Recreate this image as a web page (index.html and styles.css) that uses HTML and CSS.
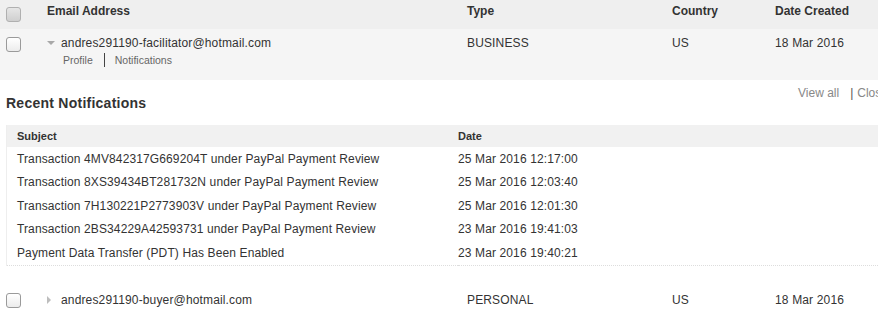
FILE: index.html
```html
<!DOCTYPE html>
<html lang="en">
<head>
    <meta charset="UTF-8">
    <title>Sandbox Accounts</title>
    <link rel="stylesheet" href="styles.css">
</head>
<body>
    <div class="page">
        <div class="account-row head-row">
            <span class="check check-all"></span>
            <div class="cell">Email Address</div>
            <div class="cell">Type</div>
            <div class="cell">Country</div>
            <div class="cell">Date Created</div>
        </div>

        <div class="account-row open-row">
            <span class="check"></span>
            <div class="cell">
                <div class="email"><span class="arrow arrow-down"></span>andres291190-facilitator@hotmail.com</div>
                <div class="links">
                    <a href="#">Profile</a>
                    <span class="sep"></span>
                    <a href="#">Notifications</a>
                </div>
            </div>
            <div class="cell">BUSINESS</div>
            <div class="cell">US</div>
            <div class="cell">18 Mar 2016</div>
        </div>

        <div class="notifications">
            <div class="notif-head">
                <h3>Recent Notifications</h3>
                <div class="notif-actions"><a href="#" class="view-all">View all</a><span class="pipe">|</span><a href="#">Close</a></div>
            </div>
            <table class="notif-table">
                <thead>
                    <tr>
                        <th class="subject">Subject</th>
                        <th>Date</th>
                    </tr>
                </thead>
                <tbody>
                    <tr><td class="subject">Transaction 4MV842317G669204T under PayPal Payment Review</td><td>25 Mar 2016 12:17:00</td></tr>
                    <tr><td class="subject">Transaction 8XS39434BT281732N under PayPal Payment Review</td><td>25 Mar 2016 12:03:40</td></tr>
                    <tr><td class="subject">Transaction 7H130221P2773903V under PayPal Payment Review</td><td>25 Mar 2016 12:01:30</td></tr>
                    <tr><td class="subject">Transaction 2BS34229A42593731 under PayPal Payment Review</td><td>23 Mar 2016 19:41:03</td></tr>
                    <tr><td class="subject">Payment Data Transfer (PDT) Has Been Enabled</td><td>23 Mar 2016 19:40:21</td></tr>
                </tbody>
            </table>
        </div>

        <div class="account-row closed-row">
            <span class="check"></span>
            <div class="cell">
                <div class="email"><span class="arrow arrow-right"></span>andres291190-buyer@hotmail.com</div>
            </div>
            <div class="cell">PERSONAL</div>
            <div class="cell">US</div>
            <div class="cell">18 Mar 2016</div>
        </div>
    </div>
</body>
</html>
```

FILE: styles.css
```css
html, body {
    margin: 0;
    overflow: hidden;
}

body {
    font-family: "Liberation Sans", Arial, sans-serif;
    font-size: 12px;
    color: #333;
    background: #fff;
}

a {
    color: inherit;
    text-decoration: none;
}

.page {
    width: 900px;
}

.account-row {
    display: grid;
    grid-template-columns: 41px 420px 205px 103px 1fr;
    padding-left: 6px;
    line-height: 16px;
    letter-spacing: 0.15px;
}

.head-row {
    height: 29px;
    box-sizing: border-box;
    padding-top: 3px;
    background: #efefef;
    font-weight: bold;
    letter-spacing: 0;
}

.head-row .check {
    margin-top: 4px;
}

.open-row {
    padding-top: 6px;
    padding-bottom: 12px;
    background: #f5f5f5;
}

.closed-row {
    margin-top: 18px;
    padding-top: 8px;
}

.check {
    display: block;
    width: 13px;
    height: 13px;
    margin-top: 2px;
    border: 1px solid #9a9a9a;
    border-radius: 3px;
    background: linear-gradient(#fff, #ececec);
}

.closed-row .check {
    margin-top: 1px;
}

.check-all {
    border-color: #b0b0b0;
    background: linear-gradient(#e6e6e6, #cfcfcf);
}

.email {
    position: relative;
    padding-left: 14px;
}

.arrow {
    position: absolute;
    width: 0;
    height: 0;
}

.arrow-down {
    left: 0;
    top: 6px;
    border-left: 4px solid transparent;
    border-right: 4px solid transparent;
    border-top: 4px solid #a8a8a8;
}

.arrow-right {
    left: 0;
    top: 4px;
    border-top: 4px solid transparent;
    border-bottom: 4px solid transparent;
    border-left: 4px solid #bdbdbd;
}

.links {
    display: flex;
    align-items: center;
    margin-top: 1px;
    padding-left: 16px;
    font-size: 10.5px;
    letter-spacing: 0;
    color: #666;
}

.sep {
    width: 1px;
    height: 14px;
    margin: 0 10px 0 11px;
    background: #444;
}

.notif-head {
    display: flex;
    justify-content: space-between;
    align-items: flex-start;
    padding: 0 0 0 6px;
}

.notif-head h3 {
    margin: 14px 0 0;
    font-size: 14px;
    line-height: 18px;
    letter-spacing: 0.25px;
}

.notif-actions {
    display: flex;
    width: 102px;
    margin-top: 6px;
    line-height: 14px;
    color: #888;
    white-space: nowrap;
}

.view-all {
    margin-right: 11px;
}

.pipe {
    margin-right: 4px;
    color: #555;
}

.notif-table {
    margin: 13px 0 0 6px;
    width: 894px;
    border-collapse: collapse;
    border-left: 1px solid #eee;
    border-bottom: 1px dotted #ddd;
    font-size: 12px;
    letter-spacing: 0.12px;
}

.notif-table th {
    height: 22px;
    padding: 0;
    background: #f1f1f1;
    text-align: left;
    font-size: 11px;
    letter-spacing: 0;
}

.notif-table td {
    height: 23.5px;
    padding: 0;
}

.notif-table .subject {
    width: 441px;
    padding-left: 10px;
}
```
